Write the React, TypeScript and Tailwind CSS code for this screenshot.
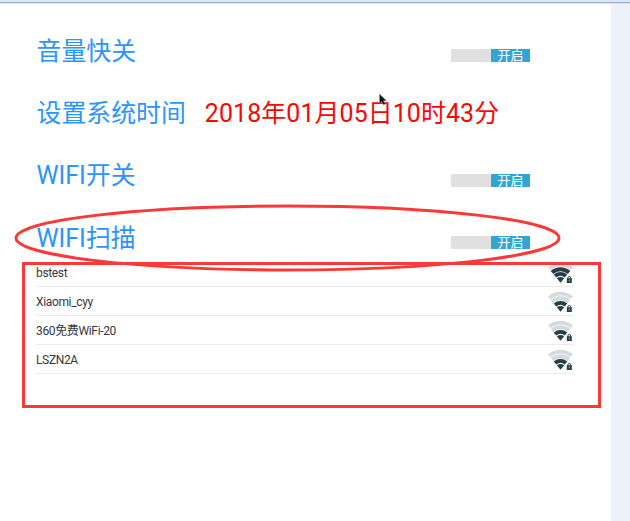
const networks = [
  { name: 'bstest', strong: true },
  { name: 'Xiaomi_cyy', strong: false },
  { name: '360免费WiFi-20', strong: false },
  { name: 'LSZN2A', strong: false },
];

function Toggle() {
  return (
    <div className="flex h-[13px] w-[79px] bg-[#e0e0e0] pl-[40px]">
      <div className="flex h-[13px] w-[39px] items-center justify-center bg-[#33a5d2] text-[13px] leading-[13px] text-white">
        开启
      </div>
    </div>
  );
}

function WifiIcon({ strong }: { strong: boolean }) {
  return (
    <svg width="26" height="22" viewBox="0 0 26 22" fill="none" className="mt-[4px] shrink-0">
      <path d="M1.3 5.8A17 17 0 0 1 23.7 5.8" stroke="#d5dbdc" strokeWidth="3.8" />
      <path d="M4 9.4A13 13 0 0 1 21 9.4" stroke={strong ? '#263f47' : '#d5dbdc'} strokeWidth="3.9" />
      <path d="M7 13A8.6 8.6 0 0 1 18 13" stroke="#263f47" strokeWidth="4" />
      <path d="M8.8 15.3Q12.5 12.5 16.2 15.3L12.5 19.8Z" fill="#263f47" />
      <path d="M19.8 15.6V15a1.5 1.5 0 0 1 3 0V15.6" stroke="#263f47" strokeWidth="1" />
      <path d="M18.8 15.2H23.8V20H18.8Z" fill="#263f47" />
      <path d="M20.8 16.7H21.8V18.3H20.8Z" fill="#a4b0b3" />
    </svg>
  );
}

function Setting({ label, toggle = true, time }: { label: string; toggle?: boolean; time?: string }) {
  return (
    <div className="flex h-[62.4px] w-[493.5px] items-center whitespace-nowrap text-[24.9px] text-[#2b94ff]">
      <span>{label}</span>
      {time && <span className="ml-[19px] tracking-[0.12px] text-[#fb0505]">{time}</span>}
      {toggle && <div className="ml-auto pt-[9px]"><Toggle /></div>}
    </div>
  );
}

export default function App() {
  return (
    <div className="relative flex h-[521px] w-[630px] flex-col overflow-hidden bg-white font-['Roboto','Noto_Sans_CJK_SC',sans-serif]">
      <div className="h-1 shrink-0 border-b border-[#dbe6f3] bg-[#dae7f5] pt-[2px]">
        <div className="h-px bg-[#9bb0d0]" />
      </div>
      <div className="flex flex-1">
        <main className="w-[611px] pt-[16px] pl-[36.5px]">
          <Setting label="音量快关" />
          <Setting label="设置系统时间" time="2018年01月05日10时43分" toggle={false} />
          <Setting label="WIFI开关" />
          <Setting label="WIFI扫描" />
          <div className="-mt-[12px] -ml-[0.5px] w-[537.5px]">
            {networks.map((n) => (
              <div key={n.name} className="flex h-[29px] items-center justify-between border-b border-[#ebebeb] text-[12px] tracking-[-0.35px] text-[#383838]">
                <span className="pt-[2px]">{n.name}</span>
                <WifiIcon strong={n.strong} />
              </div>
            ))}
          </div>
        </main>
        <aside className="flex-1 bg-[#ecf1fa]" />
      </div>
      <svg className="absolute inset-0" width="630" height="521" fill="none">
        <ellipse cx="287.5" cy="238" rx="271.5" ry="32" stroke="#fa3838" strokeWidth="3" />
        <rect x="23.5" y="263.5" width="576" height="143" stroke="#fa3838" strokeWidth="3" />
        <path d="M379.5 94V103.5L381.8 101.5L383.6 105L385.4 104L383.6 100.8H386.5Z" fill="#111" stroke="#999" strokeWidth=".5" />
      </svg>
    </div>
  );
}
